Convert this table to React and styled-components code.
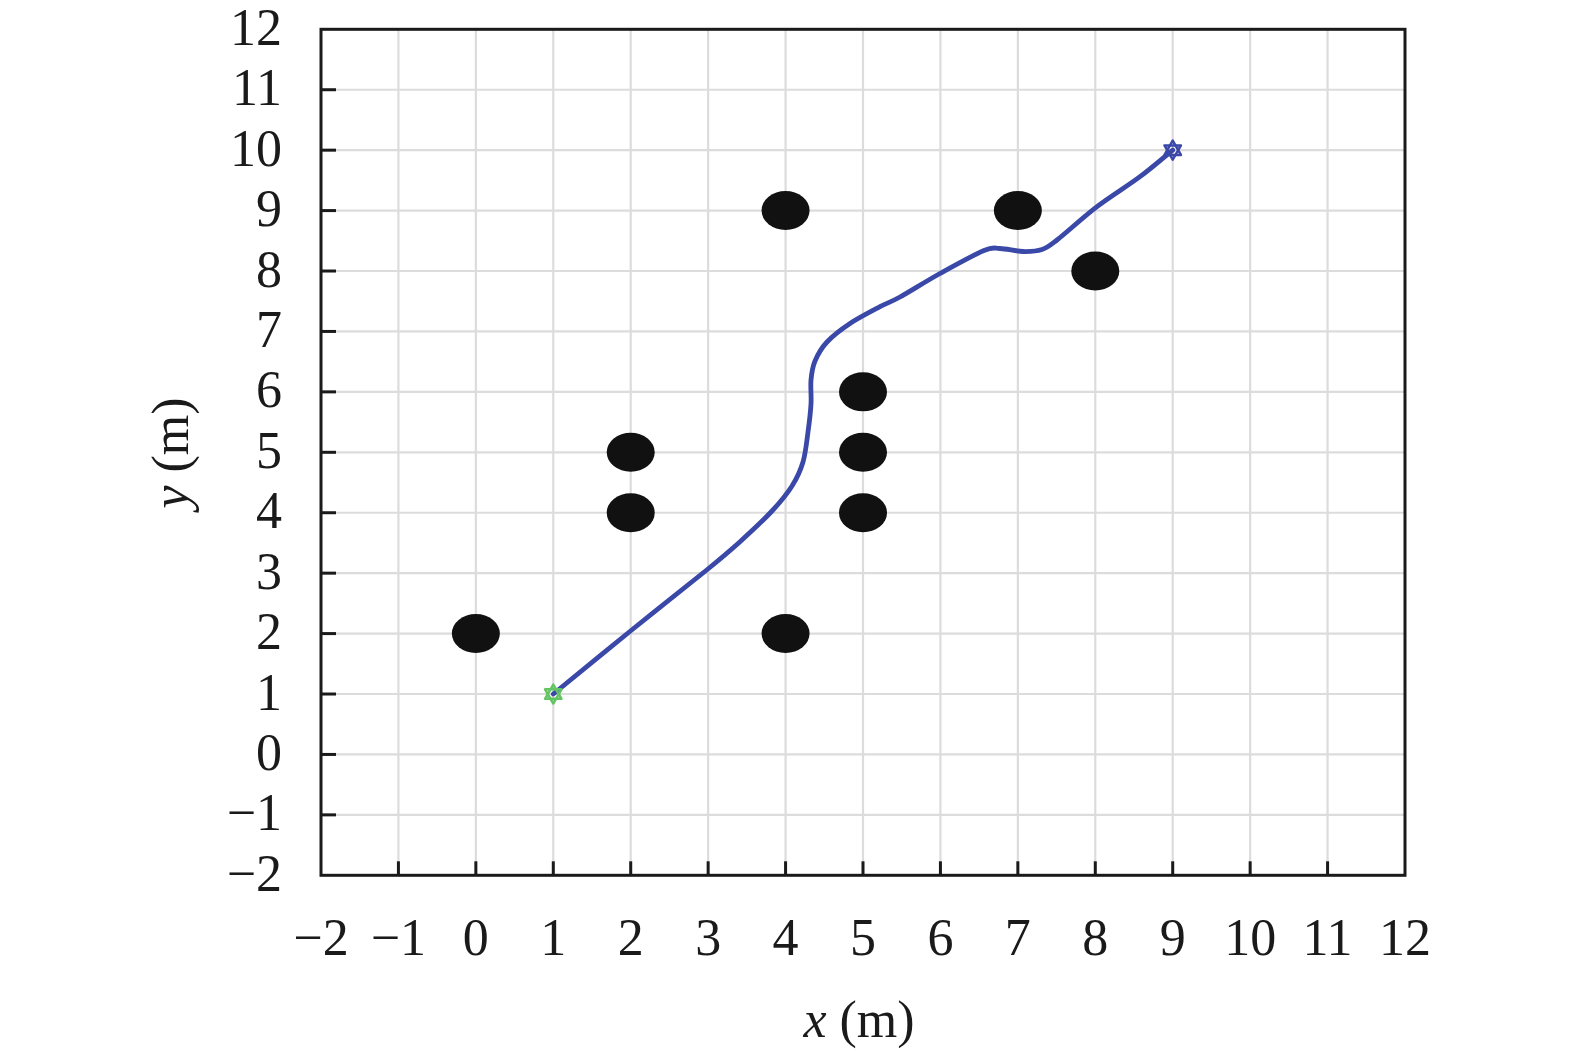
import React from "react";
import styled, { createGlobalStyle } from "styled-components";

const GlobalStyle = createGlobalStyle`
  html, body {
    margin: 0;
    padding: 0;
    background: #ffffff;
  }
  body {
    font-family: "Liberation Serif", "Times New Roman", serif;
    color: #1a1a1a;
  }
`;

// plot frame in page coordinates
const LEFT = 321;
const TOP = 29.3;
const RIGHT = 1405;
const BOTTOM = 875.3;
const XS = (RIGHT - LEFT) / 14;
const YS = (BOTTOM - TOP) / 14;
const X = (v) => LEFT + (v + 2) * XS;
const Y = (v) => BOTTOM - (v + 2) * YS;

const TICKS = Array.from({ length: 15 }, (_, i) => i - 2);
const INNER = TICKS.filter((t) => t > -2 && t < 12);

const obstacles = [
  [4, 9], [7, 9], [8, 8],
  [5, 6], [5, 5], [5, 4],
  [2, 5], [2, 4],
  [0, 2], [4, 2],
];

const route = [
  [553.3, 694], [631.7, 630], [706.7, 570], [740, 541.7], [772, 511],
  [792, 486], [803, 462], [808, 432], [811, 404], [811, 380],
  [815, 361], [827, 342], [850, 323.5],
  [880, 306.7], [900, 297], [940, 273.5], [984, 250.5], [1000, 248.5],
  [1023, 251.5], [1042, 249.5], [1057, 240], [1097, 206.7], [1140, 176.7],
  [1172.7, 150.1],
];

const smoothPath = (pts) => {
  let d = `M${pts[0][0]},${pts[0][1]}`;
  for (let i = 0; i < pts.length - 1; i++) {
    const p0 = pts[i - 1] || pts[i];
    const p1 = pts[i];
    const p2 = pts[i + 1];
    const p3 = pts[i + 2] || p2;
    const c1x = p1[0] + (p2[0] - p0[0]) / 6;
    const c1y = p1[1] + (p2[1] - p0[1]) / 6;
    const c2x = p2[0] - (p3[0] - p1[0]) / 6;
    const c2y = p2[1] - (p3[1] - p1[1]) / 6;
    d += ` C${c1x},${c1y} ${c2x},${c2y} ${p2[0]},${p2[1]}`;
  }
  return d;
};

const triangle = (cx, cy, r, start) =>
  [0, 120, 240]
    .map((a) => {
      const rad = ((a + start) * Math.PI) / 180;
      return `${cx + r * Math.cos(rad)},${cy + r * Math.sin(rad)}`;
    })
    .join(" ");

const label = (v) => (v < 0 ? `\u2212${-v}` : `${v}`);

const Figure = styled.div`
  width: 1575px;
  height: 1055px;
  display: grid;
  grid-template-columns: 210px 1365px;
  grid-template-rows: 980px 75px;
  overflow: hidden;
`;

const YTitleCell = styled.div`
  grid-column: 1;
  grid-row: 1;
  display: flex;
  align-items: center;
  justify-content: center;
  box-sizing: border-box;
  padding: 0 0 75px 131px;
`;

const XTitleCell = styled.div`
  grid-column: 2;
  grid-row: 2;
  display: flex;
  align-items: flex-start;
  justify-content: center;
  box-sizing: border-box;
  padding: 14px 67px 0 0;
`;

const AxisTitle = styled.div`
  flex: none;
  font-size: 52px;
  line-height: 52px;
  white-space: nowrap;
  transform: ${(p) => (p.$vertical ? "rotate(-90deg)" : "none")};

  i {
    font-style: italic;
  }
`;

const Chart = styled.svg`
  grid-column: 2;
  grid-row: 1;
  display: block;
  width: 1365px;
  height: 980px;

  text {
    font-family: "Liberation Serif", "Times New Roman", serif;
    font-size: 52px;
    fill: #1a1a1a;
  }
`;

const GRID = "#dcdcdc";
const INK = "#1a1a1a";
const PATH = "#3a48a8";

const Star = ({ cx, cy, color }) => (
  <g fill="none" stroke={color} strokeWidth="2.5" strokeLinejoin="round">
    <polygon points={triangle(cx, cy, 9.5, -90)} />
    <polygon points={triangle(cx, cy, 9.5, 90)} />
  </g>
);

const App = () => {
  return (
    <>
      <GlobalStyle />
      <Figure>
        <YTitleCell>
          <AxisTitle $vertical>
            <i>y</i> (m)
          </AxisTitle>
        </YTitleCell>

        <Chart viewBox="210 0 1365 980">
          {INNER.map((t) => (
            <line key={`gx${t}`} x1={X(t)} x2={X(t)} y1={TOP} y2={BOTTOM} stroke={GRID} strokeWidth="2.2" />
          ))}
          {INNER.map((t) => (
            <line key={`gy${t}`} x1={LEFT} x2={RIGHT} y1={Y(t)} y2={Y(t)} stroke={GRID} strokeWidth="2.2" />
          ))}

          {obstacles.map(([ox, oy]) => (
            <ellipse key={`${ox}-${oy}`} cx={X(ox)} cy={Y(oy)} rx="24" ry="19.5" fill="#111111" />
          ))}

          <path d={smoothPath(route)} fill="none" stroke={PATH} strokeWidth="4.8" strokeLinecap="round" strokeLinejoin="round" />

          <Star cx={X(1)} cy={Y(1)} color="#62c462" />
          <Star cx={X(9)} cy={Y(10)} color={PATH} />

          {INNER.map((t) => (
            <line key={`tx${t}`} x1={X(t)} x2={X(t)} y1={BOTTOM} y2={BOTTOM - 14} stroke={INK} strokeWidth="3" />
          ))}
          {INNER.map((t) => (
            <line key={`ty${t}`} x1={LEFT} x2={LEFT + 15} y1={Y(t)} y2={Y(t)} stroke={INK} strokeWidth="3" />
          ))}
          <rect x={LEFT} y={TOP} width={RIGHT - LEFT} height={BOTTOM - TOP} fill="none" stroke={INK} strokeWidth="3" />

          {TICKS.map((t) => (
            <text key={`lx${t}`} x={X(t)} y="955" textAnchor="middle">
              {label(t)}
            </text>
          ))}
          {TICKS.map((t) => (
            <text key={`ly${t}`} x="282" y={Y(t) + 15.5} textAnchor="end">
              {label(t)}
            </text>
          ))}
        </Chart>

        <XTitleCell>
          <AxisTitle>
            <i>x</i> (m)
          </AxisTitle>
        </XTitleCell>
      </Figure>
    </>
  );
};

export default App;
